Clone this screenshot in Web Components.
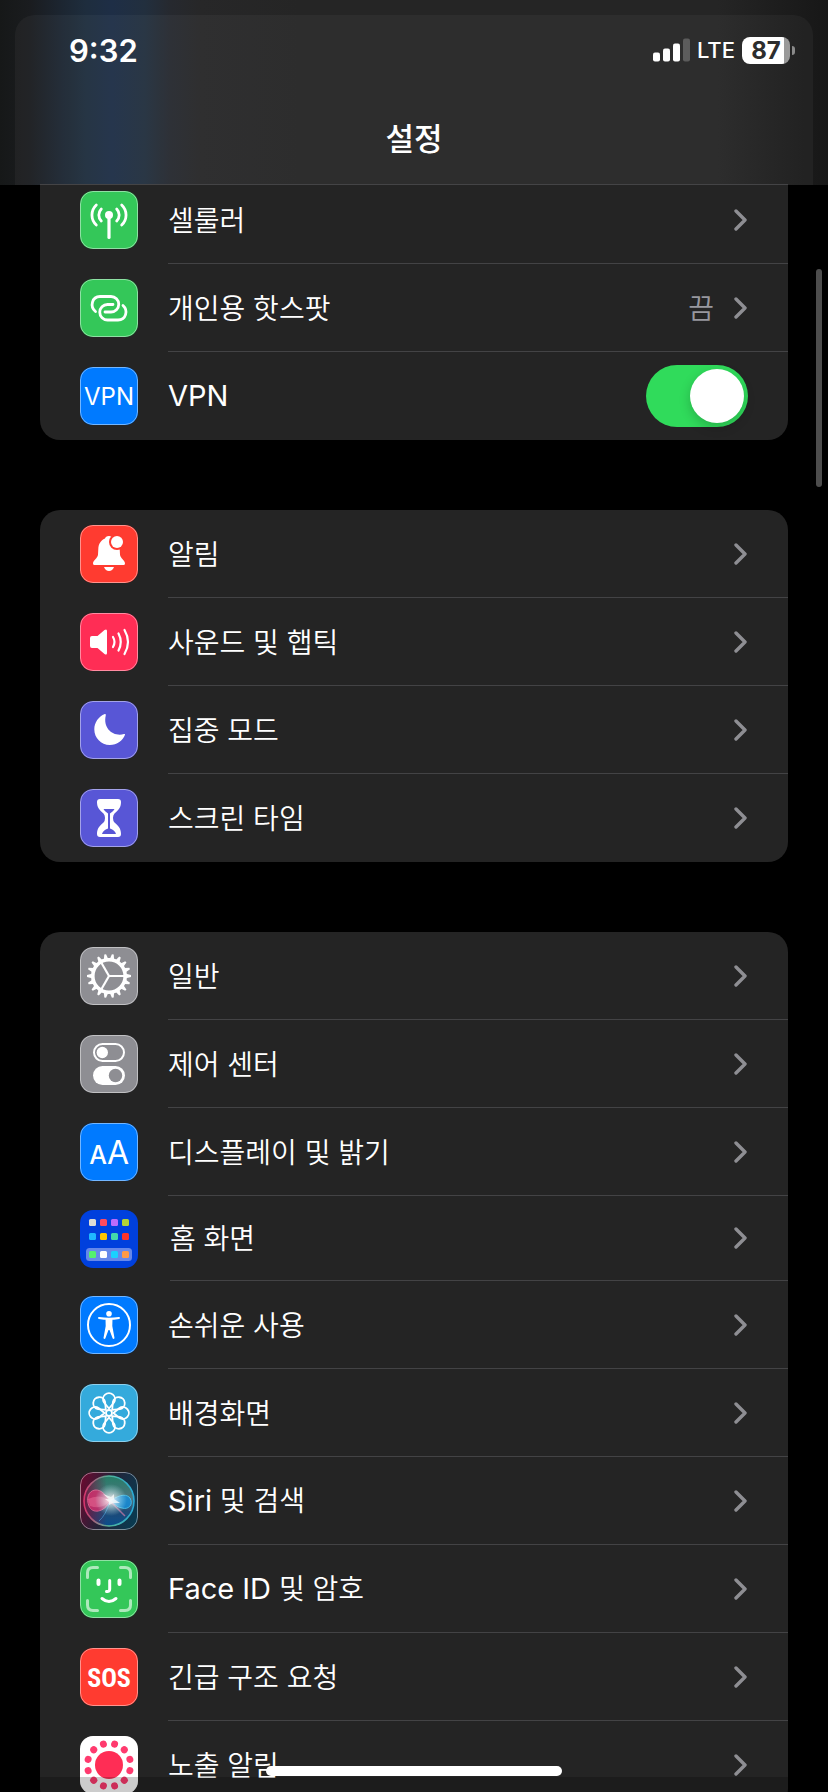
<!DOCTYPE html>
<html lang="ko">
<head>
<meta charset="utf-8">
<meta name="viewport" content="width=device-width, initial-scale=1">
<title>설정</title>
<style>
  body {
    margin: 0;
    background: #000;
    color: #fff;
    font-family: "Noto Sans CJK KR", sans-serif;
    overflow: hidden;
  }

  .latin {
    font-family: Inter, sans-serif;
    font-size: 29px;
    font-weight: 400;
  }
</style>
</head>
<body>
<settings-header>설정</settings-header>

<settings-list>
  <settings-group continued>
    <settings-row icon="cellular">셀룰러</settings-row>
    <settings-row icon="hotspot" value="끔">개인용 핫스팟</settings-row>
    <settings-row icon="vpn" toggle><span class="latin">VPN</span></settings-row>
  </settings-group>

  <settings-group>
    <settings-row icon="bell">알림</settings-row>
    <settings-row icon="sound">사운드 및 햅틱</settings-row>
    <settings-row icon="moon">집중 모드</settings-row>
    <settings-row icon="hourglass">스크린 타임</settings-row>
  </settings-group>

  <settings-group>
    <settings-row icon="gear">일반</settings-row>
    <settings-row icon="control">제어 센터</settings-row>
    <settings-row icon="display">디스플레이 및 밝기</settings-row>
    <settings-row icon="home" compact>홈 화면</settings-row>
    <settings-row icon="access">손쉬운 사용</settings-row>
    <settings-row icon="wallpaper">배경화면</settings-row>
    <settings-row icon="siri"><span class="latin">Siri</span> 및 검색</settings-row>
    <settings-row icon="face"><span class="latin">Face ID</span> 및 암호</settings-row>
    <settings-row icon="sos">긴급 구조 요청</settings-row>
    <settings-row icon="exposure">노출 알림</settings-row>
  </settings-group>
</settings-list>

<scroll-thumb></scroll-thumb>
<home-indicator></home-indicator>

<script>
// the same shape repeated around the centre of a 58x58 icon
const around = (count, start, shape) =>
  Array.from(
    { length: count },
    (_, i) => `<g transform="rotate(${start + (i * 360) / count} 29 29)">${shape}</g>`
  ).join('');

const homeTiles = [
  ['#dcdcd5', '#ff4b60', '#bb6bfd', '#b3d435'],
  ['#1fb8ff', '#ffc600', '#44d9ab', '#ff342a'],
  ['#54f06e', '#ffffff', '#1ad0ff', '#ff9a45']
]
  .map((row, y) =>
    row
      .map((fill, x) => `<rect x="${9 + x * 11}" y="${[9, 23, 41][y]}" width="7" height="7" rx="1.5" fill="${fill}"/>`)
      .join('')
  )
  .join('');

const icons = {
  cellular: {
    color: '#34c759',
    art: `
      <circle cx="29" cy="24" r="4" fill="#fff"/>
      <g class="line" stroke-width="2.8">
        <path d="M29 24V46.5" stroke-width="3.2"/>
        <path d="M21.3 18C18 21.500 18 26.500 21.300 30M36.700 18C40 21.500 40 26.500 36.700 30"/>
        <path d="M16.300 14C10.500 19.500 10.500 28.500 16.300 34M41.700 14C47.500 19.500 47.500 28.500 41.700 34"/>
      </g>`
  },
  hotspot: {
    color: '#34c759',
    art: `
      <g class="line" stroke-width="2.8">
        <path d="M15.500 32.500C9.500 27.500 12 17.500 20 17.500H31A7.750 7.750 0 0 1 31 33H25"/>
        <path d="M33 25.500H27.500A7.750 7.750 0 0 0 27.500 41H38C46 41 48.500 31.500 43 26.500"/>
      </g>`
  },
  vpn: {
    color: '#007aff',
    art: `<text x="29" y="38" font-size="24" text-anchor="middle">VPN</text>`
  },
  bell: {
    color: '#ff3b30',
    art: `
      <path fill="#fff" d="M29 11C26.500 11 25.500 12 25 13.500C20.500 15.500 18.500 19 18.300 24L18 29.500C17.700 33.500 13 35 13 38.500Q13 40 14.500 40H43.500Q45 40 45 38.500C45 35 40.300 33.500 40 29.500L39.700 24C39.500 19 37.500 15.500 33 13.500C32.500 12 31.500 11 29 11Z"/>
      <path fill="#fff" d="M24 42H34Q32.500 46 29 46Q25.500 46 24 42Z"/>
      <circle cx="37" cy="17" r="8" fill="#ff3b30"/>
      <circle cx="37" cy="17" r="6" fill="#fff"/>`
  },
  sound: {
    color: '#ff2d55',
    art: `
      <path fill="#fff" d="M12 23H17.500L24.500 17Q27 15.500 27 18V40Q27 42.500 24.500 41L17.500 35H12Q10 35 10 33V25Q10 23 12 23Z"/>
      <g class="line" stroke-width="2.200">
        <path d="M33 24Q36 29 33 34M38.500 20.500Q43 29 38.500 37.500M44.500 17Q51.500 29 44.500 41"/>
      </g>`
  },
  moon: {
    color: '#5856d6',
    art: `<path fill="#fff" d="M24.800 13C18.500 15.500 14.300 21.500 14.300 28.300C14.300 37 21 44 29.800 44C37 44 43 39.500 45 33.800Q45.300 32.600 44 33C34 36 22.500 28 25.800 14.200Q26 12.700 24.800 13Z"/>`
  },
  hourglass: {
    color: '#5856d6',
    art: `
      <path fill="#fff" d="M20 10H38Q41 10 41 13C41 18.500 38.500 21 34.500 24.500Q33 26 33 29Q33 32 34.500 33.500C38.500 37 41 39.500 41 45Q41 48 38 48H20Q17 48 17 45C17 39.500 19.500 37 23.500 33.500Q25 32 25 29Q25 26 23.500 24.500C19.500 21 17 18.500 17 13Q17 10 20 10Z"/>
      <path fill="#5856d6" d="M23.500 20H34.500Q33.500 22.500 30 24.500V39.500Q35 41 36 45H22Q23 41 28 39.500V24.500Q24.500 22.500 23.500 20Z"/>`
  },
  gear: {
    color: '#8e8e93',
    art: `
      <g fill="none" stroke="#fff">
        <circle cx="29" cy="29" r="16.200" stroke-width="3.600"/>
        ${around(3, 0, '<path d="M29 29H44" stroke-width="2.200"/>')}
      </g>
      ${around(18, 0, '<path d="M46 26.800L51 28.100V29.900L46 31.200Z" fill="#fff"/>')}`
  },
  control: {
    color: '#8e8e93',
    art: `
      <rect x="14" y="9" width="30" height="17" rx="8.500" class="line" stroke-width="2"/>
      <circle cx="22.300" cy="17.500" r="5.700" fill="#fff"/>
      <rect x="13" y="31" width="32" height="19" rx="9.500" fill="#fff"/>
      <circle cx="35.500" cy="40.500" r="6.700" fill="#8e8e93"/>`
  },
  display: {
    color: '#007aff',
    art: `
      <text x="18" y="41" font-size="25" font-weight="500" text-anchor="middle">A</text>
      <text x="38" y="41" font-size="32" text-anchor="middle">A</text>`
  },
  home: {
    color: '#0040dd',
    plain: true,
    art: `<rect x="6" y="38" width="46" height="13" rx="3.500" fill="#6688ea"/>${homeTiles}`
  },
  access: {
    color: '#007aff',
    art: `
      <circle cx="29" cy="29" r="21" class="line" stroke-width="2"/>
      <circle cx="29" cy="17.700" r="2.800" fill="#fff"/>
      <path d="M19 22C25 23 33 23 39 22" class="line" stroke-width="2"/>
      <path fill="#fff" d="M25.500 22.500H32.500L32.300 30L34.500 42Q34 43.500 32.700 42.500L29.500 34H28.500L25.300 42.500Q24 43.500 23.500 42L25.700 30Z"/>`
  },
  wallpaper: {
    color: '#34aadc',
    art: `
      <g class="line" stroke-width="1.800">
        <circle cx="29" cy="29" r="3"/>
        ${around(8, 0, '<path d="M29 24.500L24 18.500A6 6 0 1 1 34 18.500Z"/>')}
      </g>`
  },
  siri: {
    color: '#1b1b2e',
    art: `
      <defs>
        <linearGradient id="base" x1="0" y1="0.300" x2="1" y2="0.600">
          <stop offset="0" stop-color="#650b30"/>
          <stop offset="0.450" stop-color="#242338"/>
          <stop offset="1" stop-color="#0a3a50"/>
        </linearGradient>
        <linearGradient id="orb" x1="0.500" y1="0" x2="0.500" y2="1">
          <stop offset="0" stop-color="#257d66"/>
          <stop offset="0.450" stop-color="#4f7580"/>
          <stop offset="0.700" stop-color="#214b75"/>
          <stop offset="1" stop-color="#0a4d8c"/>
        </linearGradient>
        <linearGradient id="side" x1="0" y1="0.500" x2="1" y2="0.500">
          <stop offset="0" stop-color="#6d1740"/>
          <stop offset="0.450" stop-color="#6d1740" stop-opacity="0"/>
        </linearGradient>
        <linearGradient id="ring" x1="0" y1="0.500" x2="1" y2="0.500">
          <stop offset="0" stop-color="#d6336c"/>
          <stop offset="0.500" stop-color="#50b59a"/>
          <stop offset="1" stop-color="#28a9d6"/>
        </linearGradient>
        <radialGradient id="shine">
          <stop offset="0" stop-color="#fff"/>
          <stop offset="0.250" stop-color="#fff" stop-opacity="0.800"/>
          <stop offset="1" stop-color="#bff" stop-opacity="0"/>
        </radialGradient>
      </defs>
      <rect width="58" height="58" fill="url(#base)"/>
      <circle cx="29" cy="29" r="25" fill="url(#orb)"/>
      <circle cx="29" cy="29" r="25" fill="url(#side)" stroke="url(#ring)" stroke-width="1.600"/>
      <path d="M30 29C25 22 21 17.500 15 18C8 19 6 27 9 34C12 42 24 41 30 29Z" fill="#df2f70" opacity="0.750" stroke="#ff74a5"/>
      <path d="M8 27Q20 21 30 29Q22 38 10 34" fill="#ff8bae" opacity="0.350"/>
      <path d="M30 29C36 25 45 20 50 26C54 33 48 38 42 36C36 35 34 31 30 29Z" fill="#168cd8" opacity="0.850" stroke="#4ac8f5"/>
      <path d="M30 29L45 44" stroke="#d07da8" stroke-width="1.500" opacity="0.700"/>
      <path d="M30 29Q26 43 19 49" fill="none" stroke="#4ca9e5" opacity="0.600"/>
      <circle cx="31" cy="28" r="16" fill="url(#shine)" opacity="0.800"/>
      <path d="M23 22L31 25L34 22L34 27L40 31L33 31L29 33L29 30L25 27L29 27Z" fill="#fff" opacity="0.700"/>`
  },
  face: {
    color: '#34c759',
    art: `
      <g class="line" stroke-width="3">
        <path opacity="0.600" d="M7.500 17.500V13Q7.500 7.500 13 7.500H17.500M40.500 7.500H45Q50.500 7.500 50.500 13V17.500M50.500 40.500V45Q50.500 50.500 45 50.500H40.500M17.500 50.500H13Q7.500 50.500 7.500 45V40.500"/>
        <path d="M18.500 20.500V24M39.500 20.500V24" stroke-width="4"/>
        <path d="M29.700 20.500V29Q29.700 32 26.500 31.500M22 38.500Q29 44.500 36 38.500"/>
      </g>`
  },
  sos: {
    color: '#ff3b30',
    art: `<text x="29" y="39" font-size="26" font-weight="700" text-anchor="middle" class="narrow">SOS</text>`
  },
  exposure: {
    color: '#ffffff',
    art: `
      <circle cx="29" cy="29" r="14" fill="#ff2d55"/>
      ${around(12, 15, '<circle cx="50.600" cy="29" r="3.500" fill="#ff3a6e"/>')}`
  }
};

customElements.define(
  'app-icon',
  class extends HTMLElement {
    constructor() {
      super();
      this.attachShadow({ mode: 'open' });
    }

    connectedCallback() {
      const icon = icons[this.getAttribute('name')];

      this.shadowRoot.innerHTML = `
      <style>
        :host {
          display: block;
          position: relative;
          flex: none;
          width: 58px;
          height: 58px;
          border-radius: 13px;
          overflow: hidden;
          background: ${icon.color};
        }

        :host::after {
          content: "";
          position: absolute;
          inset: 0;
          border: ${icon.plain ? 0 : 1}px solid rgba(255, 255, 255, 0.45);
          border-radius: inherit;
        }

        svg {
          display: block;
        }

        .line {
          fill: none;
          stroke: #fff;
          stroke-linecap: round;
          stroke-linejoin: round;
        }

        text {
          fill: #fff;
          font-family: Inter, sans-serif;
        }

        .narrow {
          font-family: "Roboto Condensed", "Liberation Sans Narrow", "Open Sans Condensed", Roboto, sans-serif;
        }
      </style>
      <svg width="58" height="58" viewBox="0 0 58 58" aria-hidden="true">${icon.art}</svg>
    `;
    }
  }
);

customElements.define(
  'settings-toggle',
  class extends HTMLElement {
    constructor() {
      super();

      this.attachShadow({ mode: 'open' }).innerHTML = `
      <style>
        :host {
          display: block;
          flex: none;
        }

        input {
          appearance: none;
          display: flex;
          justify-content: flex-start;
          box-sizing: border-box;
          width: 102px;
          height: 62px;
          margin: 0;
          padding: 4px;
          border-radius: 31px;
          background: #39393d;
        }

        input:checked {
          justify-content: flex-end;
          background: #30db5b;
        }

        input::before {
          content: "";
          width: 54px;
          height: 54px;
          border-radius: 50%;
          background: #fff;
          box-shadow: 0 4px 12px rgba(0, 0, 0, 0.2);
        }
      </style>
      <input type="checkbox" role="switch" aria-label="VPN" checked>
    `;
    }
  }
);

customElements.define(
  'settings-row',
  class extends HTMLElement {
    constructor() {
      super();
      this.attachShadow({ mode: 'open' });
    }

    connectedCallback() {
      this.shadowRoot.innerHTML = `
      ${this.getTemplateCss()}
      ${this.getTemplateHtml()}
    `;
    }

    getTemplateHtml() {
      const icon = `<app-icon name="${this.getAttribute('icon')}"></app-icon>`;

      if (this.hasAttribute('toggle')) {
        return `
        <label class="row">
          ${icon}
          <span class="row__body">
            <span class="row__label"><slot></slot></span>
            <settings-toggle></settings-toggle>
          </span>
        </label>
      `;
      }

      return `
      <a class="row" href="#${this.getAttribute('icon')}">
        ${icon}
        <span class="row__body">
          <span class="row__label"><slot></slot></span>
          <span class="row__value">${this.getAttribute('value') || ''}</span>
          <svg class="row__chevron" width="14" height="24" viewBox="0 0 14 24" aria-hidden="true">
            <path d="M2 3L11 12L2 21"/>
          </svg>
        </span>
      </a>
    `;
    }

    getTemplateCss() {
      return `
      <style>
        :host {
          display: block;
          height: 88px;
          --gap: 30px;
        }

        :host([compact]) {
          height: 85px;
          --gap: 32px;
        }

        .row {
          display: flex;
          align-items: center;
          gap: var(--gap);
          height: 100%;
          padding-left: 40px;
          color: inherit;
          text-decoration: none;
        }

        .row__body {
          flex: 1;
          display: flex;
          align-items: center;
          gap: 20px;
          box-sizing: border-box;
          height: 100%;
          padding-right: 40px;
          border-bottom: 1px solid #434345;
        }

        :host(:last-child) .row__body {
          border-bottom-color: transparent;
        }

        .row__label,
        .row__value {
          padding-bottom: 2px;
          font-family: "Noto Sans CJK KR DemiLight", "Noto Sans CJK KR", sans-serif;
          font-size: 28px;
          font-weight: 350;
          line-height: 40px;
          white-space: nowrap;
        }

        .row__label {
          flex: 1;
        }

        .row__value {
          color: #98989f;
        }

        .row__chevron {
          flex: none;
          fill: none;
          stroke: #8e8e93;
          stroke-width: 3.4;
          stroke-linecap: round;
          stroke-linejoin: round;
        }
      </style>
    `;
    }
  }
);

customElements.define(
  'settings-group',
  class extends HTMLElement {
    constructor() {
      super();

      this.attachShadow({ mode: 'open' }).innerHTML = `
      <style>
        :host {
          display: block;
          border-radius: 20px;
          background: #242424;
          overflow: hidden;
        }

        /* its first rows are scrolled away under the header */
        :host([continued]) {
          border-top-left-radius: 0;
          border-top-right-radius: 0;
        }
      </style>
      <slot></slot>
    `;
    }
  }
);

customElements.define(
  'settings-list',
  class extends HTMLElement {
    constructor() {
      super();

      this.attachShadow({ mode: 'open' }).innerHTML = `
      <style>
        :host {
          display: flex;
          flex-direction: column;
          gap: 70px;
          padding: 176px 40px 0;
        }
      </style>
      <slot></slot>
    `;
    }
  }
);

customElements.define(
  'status-bar',
  class extends HTMLElement {
    constructor() {
      super();

      this.attachShadow({ mode: 'open' }).innerHTML = `
      <style>
        :host {
          display: flex;
          align-items: center;
          justify-content: space-between;
          height: 70px;
          padding: 0 18px 0 54px;
          font-family: Inter, sans-serif;
        }

        time {
          font-size: 31px;
          font-weight: 600;
        }

        .signals {
          display: flex;
          align-items: center;
          gap: 7px;
          font-size: 22px;
          font-weight: 500;
        }

        .battery {
          display: flex;
          align-items: center;
          gap: 2px;
        }

        .battery__level {
          width: 48px;
          border-radius: 8px;
          background: linear-gradient(90deg, #fff 87%, #999 87%);
          color: #2d2d2d;
          font-size: 24px;
          font-weight: 700;
          line-height: 27px;
          text-align: center;
        }

        .battery__tip {
          width: 3px;
          height: 9px;
          border-radius: 0 4px 4px 0;
          background: #8a8a8a;
        }
      </style>
      <time>9:32</time>
      <div class="signals">
        <svg width="37" height="24" viewBox="0 0 37 24" fill="#fff" aria-hidden="true">
          <rect y="14.500" width="7" height="9" rx="2"/>
          <rect x="10" y="10.500" width="7" height="13" rx="2"/>
          <rect x="20" y="5.500" width="7" height="18" rx="2"/>
          <rect x="30" y="0.500" width="7" height="23" rx="2" fill="#5c5c5c"/>
        </svg>
        <span>LTE</span>
        <div class="battery">
          <div class="battery__level">87</div>
          <div class="battery__tip"></div>
        </div>
      </div>
    `;
    }
  }
);

customElements.define(
  'settings-header',
  class extends HTMLElement {
    constructor() {
      super();

      this.attachShadow({ mode: 'open' }).innerHTML = `
      <style>
        :host {
          display: block;
          position: fixed;
          top: 0;
          left: 0;
          right: 0;
          z-index: 1;
          box-sizing: border-box;
          height: 185px;
          padding: 15px 15px 0;
          background: linear-gradient(90deg, #161818, #1a1c1f 30px, #1c2530 60px, #1e2d3d 85px, #1e2e46 112px, #222f3e 145px, #26292f 170px, #272728 200px, #252525 300px, #252525 calc(100% - 110px), #171717);
        }

        .panel {
          height: 170px;
          border-radius: 20px 20px 0 0;
          background: rgba(255, 255, 255, 0.04);
        }

        h1 {
          margin: 0;
          padding-top: 27px;
          font-size: 31px;
          font-weight: 500;
          line-height: 50px;
          text-align: center;
        }

        .hairline {
          height: 1px;
          margin: -1px 25px 0;
          background: #444446;
        }
      </style>
      <div class="panel">
        <status-bar></status-bar>
        <h1><slot></slot></h1>
      </div>
      <div class="hairline"></div>
    `;
    }
  }
);

customElements.define(
  'scroll-thumb',
  class extends HTMLElement {
    constructor() {
      super();

      this.attachShadow({ mode: 'open' }).innerHTML = `
      <style>
        :host {
          position: fixed;
          top: 269px;
          right: 6px;
          width: 6px;
          height: 218px;
          border-radius: 3px;
          background: #4d4d4d;
        }
      </style>
    `;
    }
  }
);

customElements.define(
  'home-indicator',
  class extends HTMLElement {
    constructor() {
      super();

      this.attachShadow({ mode: 'open' }).innerHTML = `
      <style>
        :host {
          position: fixed;
          left: 0;
          right: 0;
          bottom: 0;
          z-index: 1;
        }

        .bar {
          width: 296px;
          height: 10px;
          margin: 0 auto 1px;
          border-radius: 5px;
          background: #fff;
        }

        .shade {
          height: 15px;
          background: rgba(0, 0, 0, 0.2);
        }
      </style>
      <div class="bar"></div>
      <div class="shade"></div>
    `;
    }
  }
);
</script>
</body>
</html>
